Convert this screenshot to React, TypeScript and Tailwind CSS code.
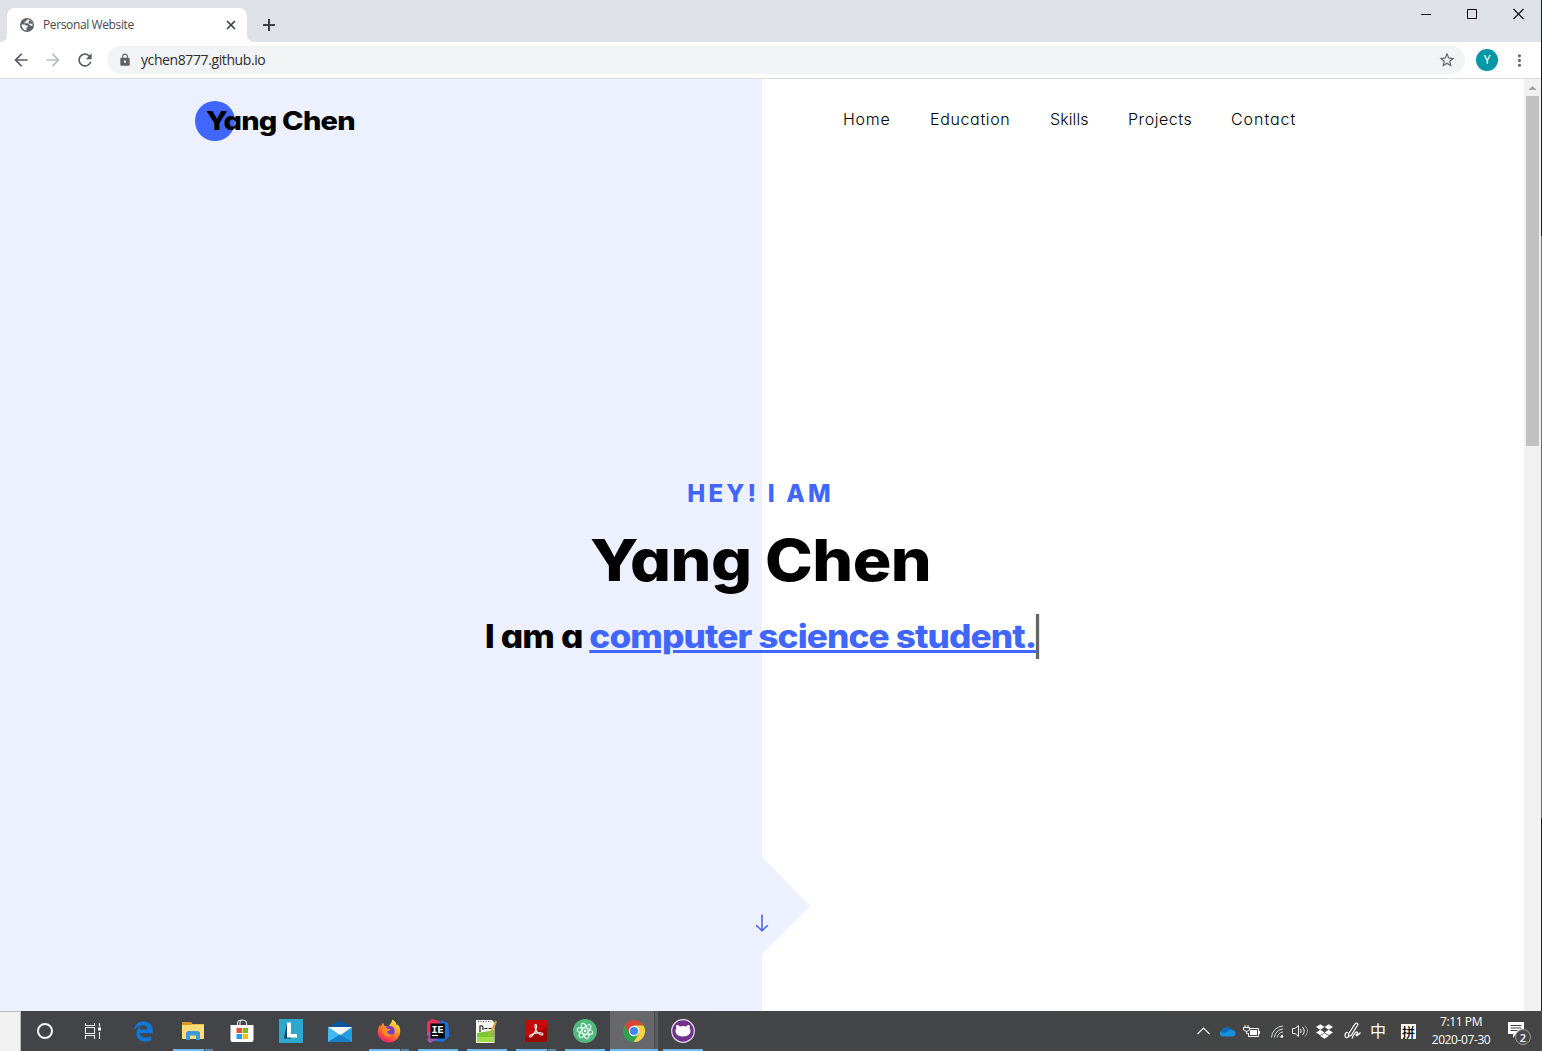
import type { ReactNode } from "react";
import {
  MdArrowBack,
  MdArrowForward,
  MdLock,
  MdMoreVert,
  MdRefresh,
  MdStarBorder,
} from "react-icons/md";
import { FaDropbox, FaEdgeLegacy } from "react-icons/fa";

const UI_FONT = "font-['Open_Sans','Noto_Sans',sans-serif]";

function GlobeIcon() {
  return (
    <svg className="ml-px shrink-0" width="14" height="14" viewBox="0 0 14 14">
      <circle cx="7" cy="7" r="7" fill="#5f6368" />
      <path d="M1.500 6.500h3.200l1.600 1.300h1.500v1.500H6.500v3.200Q2 12 1.500 6.500Z" fill="#fff" />
      <path d="M7.500 1.500l-1.300 1v1.300H4.500v1.500h3.700l1 1.400h1.300v1h2Q12.800 3 9.500 1.800Z" fill="#fff" />
      <path d="M9.300 1.700q3 1.300 3.200 4.500l-1.500-.7-1.800.3L8.300 4l1-.8Z" fill="#5f6368" />
    </svg>
  );
}

function TitleBar() {
  return (
    <div className="flex h-[42px] shrink-0 items-start bg-[#dee1e6]">
      <svg className="mt-[34px] h-2 w-[7px] shrink-0" viewBox="0 0 7 8">
        <path d="M7 0v8H0Q7 8 7 0Z" fill="#fff" />
      </svg>
      <div className="mt-2 flex h-[34px] w-[240px] shrink-0 items-center rounded-t-lg bg-white pr-[11px] pl-3">
        <GlobeIcon />
        <span className="ml-[9px] grow text-[12px] leading-4 tracking-[-0.38px] text-[#45494d]">Personal Website</span>
        <svg width="10" height="10" viewBox="0 0 10 10" stroke="#3c4043" strokeWidth="1.7">
          <path d="M1 1l8 8M9 1L1 9" />
        </svg>
      </div>
      <svg className="mt-[34px] h-2 w-2 shrink-0" viewBox="0 0 8 8">
        <path d="M0 0v8h8Q0 8 0 0Z" fill="#fff" />
      </svg>
      <svg className="mt-[19px] ml-2 shrink-0" width="12" height="12" viewBox="0 0 12 12" stroke="#3c4043" strokeWidth="2">
        <path d="M6 0v12M0 6h12" />
      </svg>
      <div className="mt-2 mr-[17px] ml-auto flex gap-[35px]">
        <svg width="11" height="12" viewBox="0 0 11 12" stroke="#000">
          <path d="M0 6.5h10" />
        </svg>
        <svg width="11" height="12" viewBox="0 0 11 12" fill="none" stroke="#000">
          <path d="M.5 1.5h9v9H.5z" />
        </svg>
        <svg width="11" height="12" viewBox="0 0 11 12" stroke="#111" strokeWidth="1.1">
          <path d="M.5 1l10 10M10.5 1l-10 10" />
        </svg>
      </div>
    </div>
  );
}

function Toolbar() {
  return (
    <div className="flex h-[37px] shrink-0 items-center border-b border-[#d9dbde] bg-white pl-[11px]">
      <MdArrowBack size={20} className="text-[#5a5e63]" />
      <MdArrowForward size={20} className="ml-3 text-[#babcbe]" />
      <MdRefresh size={20} className="ml-3 text-[#5a5e63]" />
      <div className="ml-3 flex h-7 w-[1358px] items-center rounded-full bg-[#f1f3f4] pr-[9px] pl-[11px]">
        <MdLock size={14} className="text-[#5f6368]" />
        <span className="ml-[9px] grow text-[14px] leading-5 tracking-[-0.4px] text-[#2c2d30]">
          ychen8777.github.io
        </span>
        <MdStarBorder size={18} className="text-[#5f6368]" />
      </div>
      <div className="ml-[11px] flex h-[22px] w-[22px] items-center justify-center rounded-full bg-[#0097a7] font-['Roboto',sans-serif] text-[12px] text-white">
        Y
      </div>
      <MdMoreVert size={19} className="ml-3 text-[#5f6368]" />
    </div>
  );
}

function Header() {
  return (
    <header className="relative flex h-[84px] items-center">
      <div className="ml-[195px] flex h-10 w-10 items-center rounded-full bg-[#4066ff]">
        <span className="ml-[11px] origin-left scale-x-[1.115] text-[26px] leading-none font-extrabold tracking-[-0.7px] whitespace-nowrap">
          Yang Chen
        </span>
      </div>
      <nav className="mb-[5px] ml-[608px] flex gap-10 text-[16px] leading-6 font-light">
        <a className="w-[47px] tracking-[0.7px]">Home</a>
        <a className="w-[80px] tracking-[0.65px]">Education</a>
        <a className="w-[38px] tracking-[0.1px]">Skills</a>
        <a className="w-[63px] tracking-[0.55px]">Projects</a>
        <a className="w-[65px] tracking-[0.95px]">Contact</a>
      </nav>
    </header>
  );
}

function Page() {
  return (
    <main className="relative h-[932px] w-[1524px] shrink-0 bg-[linear-gradient(90deg,#ecf0ff_50%,#ffffff_50%)] font-['Inter',sans-serif] text-black [font-feature-settings:'cv11']">
      <svg className="absolute top-[778px] left-[762px]" width="48" height="98" viewBox="0 0 48 98">
        <path d="M0 0l48 49L0 97Z" fill="#ecf0ff" />
      </svg>
      <Header />
      <section className="relative mt-[313px] flex flex-col items-center">
        <p className="mr-[3px] h-9 text-[24px] leading-9 font-extrabold tracking-[3.2px] text-[#4066ff]">HEY! I AM</p>
        <h1 className="mt-[13px] mr-[3px] h-[70px] scale-x-[1.11] text-[58px] leading-[70px] font-extrabold tracking-[-0.5px]">
          Yang Chen
        </h1>
        <h2 className="mt-[19px] flex h-[45px] scale-x-[1.1] text-[32px] leading-[45px] font-extrabold whitespace-pre">
          <span className="tracking-[-0.8px]">I am a </span>
          <span className="border-r-[3px] border-[#666] tracking-[-0.8px] text-[#4066ff] underline decoration-[3px] underline-offset-[2px]">
            computer science student.
          </span>
        </h2>
        <svg className="mt-[255px] mr-px" width="14" height="18" viewBox="0 0 14 18" fill="none" stroke="#4362e8" strokeWidth="1.5">
          <path d="M7 .5v16M1.2 11.2L7 16.8l5.8-5.6" />
        </svg>
      </section>
    </main>
  );
}

function Scrollbar() {
  return (
    <div className="flex w-[17px] shrink-0 flex-col items-center bg-[#f1f1f1]">
      <svg width="17" height="17" viewBox="0 0 17 17">
        <path d="M4.5 11L8.5 7l4 4Z" fill="#a3a3a3" />
      </svg>
      <div className="h-[350px] w-[13px] bg-[#c1c1c1]" />
    </div>
  );
}

type State = "idle" | "open" | "stacked" | "active";

function Task({ state = "idle", children }: { state?: State; children: ReactNode }) {
  return (
    <div className="relative flex h-full w-[49px] shrink-0 items-center justify-center">
      {state === "active" && (
        <div className="absolute inset-y-0 left-px flex w-[48px]">
          <div className="h-full w-[44px] bg-[#66676b]" />
          <div className="ml-px h-full w-[3px] bg-[#5b5c60]" />
        </div>
      )}
      <div className="relative">{children}</div>
      {state === "open" && <div className="absolute bottom-0 left-[5px] h-[2px] w-10 bg-[#76b9ed]" />}
      {state === "active" && <div className="absolute bottom-0 left-px h-[2px] w-12 bg-[#76b9ed]" />}
      {state === "stacked" && (
        <div className="absolute bottom-0 left-[5px] flex h-[2px] w-10">
          <div className="w-[31px] bg-[#76b9ed]" />
          <div className="ml-px w-2 bg-[#5787ab]" />
        </div>
      )}
    </div>
  );
}

const TaskViewIcon = () => (
  <svg width="18" height="18" viewBox="0 0 18 18" fill="none" stroke="#eee" strokeWidth="1.1">
    <path d="M1.5 5.5h9v6h-9zM1.5 1v2.5h9V1M1.5 17v-3.500h9V17M15.500 1v3.500M15.500 10v7" />
    <path d="M14 5.500h3v3h-3z" fill="#fff" stroke="none" />
  </svg>
);

const FolderIcon = () => (
  <svg width="22" height="20" viewBox="0 0 22 20">
    <path d="M0 1h9l1.500 2H22v15H0Z" fill="#f3bd3f" />
    <path d="M0 1h9l1 1.500L9 4H0Z" fill="#df9520" />
    <path d="M0 4h22v14H0Z" fill="#fbdc76" />
    <path d="M4 19v-7.500L6 10h10l2 1.500V19h-4v-4.500H8V19Z" fill="#3f9ad9" />
  </svg>
);

const StoreIcon = () => (
  <svg width="24" height="24" viewBox="0 0 24 24">
    <path d="M7.500 7V4.500Q7.500 1 12 1t4.500 3.500V7M10 6V4q0-3 3-3" fill="none" stroke="#ddd" strokeWidth="1.200" />
    <path d="M.5 6h23v15q0 2-2 2h-19q-2 0-2-2Z" fill="#fff" />
    <path d="M6.500 9H12v5H6.500Z" fill="#e8502b" />
    <path d="M12.700 9H18v5h-5.300Z" fill="#7fba00" />
    <path d="M6.500 15H12v5H6.500Z" fill="#209fe8" />
    <path d="M12.700 15H18v5h-5.300Z" fill="#fcb813" />
  </svg>
);

const LIcon = () => (
  <svg width="24" height="24" viewBox="0 0 24 24">
    <path d="M0 0h24v24H0Z" fill="#2da9cf" />
    <path d="M8 4L5 19.500h7l-2-4Z" fill="#15436b" />
    <path d="M8 3.500h4V15h6v3.500H8Z" fill="#fff" />
  </svg>
);

const MailIcon = () => (
  <svg width="24" height="22" viewBox="0 0 24 22">
    <path d="M0 7L12 0l12 7v4H0Z" fill="#0b559f" />
    <path d="M0 7h24v15H0Z" fill="#259fe4" />
    <path d="M0 7h24L12 15.500Z" fill="#f3f7fa" />
    <path d="M0 7l12 8L0 22Z" fill="#42b9ef" />
    <path d="M0 22l12-7.500L24 22Z" fill="#177fca" />
  </svg>
);

const FirefoxIcon = () => (
  <svg width="24" height="24" viewBox="0 0 24 24">
    <defs>
      <linearGradient id="ff" x1=".8" y1="0" x2=".25" y2="1">
        <stop offset="0" stopColor="#fff44f" />
        <stop offset=".4" stopColor="#ff9a20" />
        <stop offset=".75" stopColor="#ff4a3c" />
        <stop offset="1" stopColor="#e31587" />
      </linearGradient>
    </defs>
    <path
      d="M15.500.5c3 2 4 4.200 4.300 6l1-1C23 8 23.500 10.500 23.200 13 22.600 19 18 23.500 12 23.500S.8 19 .8 13c0-3 1-5.600 2.600-7.500L3.600 8 6 3.500 7.400 7l4 .3C13 5 14.800 3.500 15.500.5Z"
      fill="url(#ff)"
    />
    <circle cx="12.500" cy="12" r="5.200" fill="#7540d0" />
    <path d="M5 9.500c2-1.500 4-1.300 5.500.2l3 .3c-.5 1.600-2 2-3.500 2.500.7 2.500 3 3.500 6 2.500-2 3.500-7 3.500-9.500.5C5 13.500 4.500 11.500 5 9.500Z" fill="#ff8a22" />
  </svg>
);

const IntelliJIcon = () => (
  <svg width="24" height="24" viewBox="0 0 24 24">
    <path d="M1 3l5-3 8 2 3 8L5 20 1 16Z" fill="#e8305c" />
    <path d="M15 1l7 3 1.500 13L17 23l-8-1Z" fill="#1c6ee0" />
    <path d="M1 14l6-2 5 8-8 4-3-3 2-3Z" fill="#a154b5" />
    <path d="M4.500 4.500h14.300v15H4.500Z" fill="#08080a" />
    <text x="5.500" y="13.500" fill="#fff" fontFamily="Liberation Mono, monospace" fontSize="10" fontWeight="700">
      IE
    </text>
    <path d="M6.200 16.500h6" stroke="#fff" strokeWidth="1.200" />
  </svg>
);

const NotepadIcon = () => (
  <svg width="24" height="24" viewBox="0 0 24 24">
    <path d="M1 1h16l2.500 2.500V24H1Z" fill="#f6f7ef" />
    <path d="M2 14q7-1 17-3v12H2Z" fill="#79c832" />
    <path d="M2 18h17v5H2Z" fill="#a1dc49" />
    <path d="M3 2.500h13" stroke="#555" strokeDasharray="1 1.500" />
    <path d="M5 13V7q3-1 3 2v2m1.500-1.500h3m1 0h3" fill="none" stroke="#222" strokeWidth="1.200" />
    <path d="M20.500 4L15 15l-1.500 2" fill="none" stroke="#e2a137" strokeWidth="2" />
    <path d="M20 4.500l1.200-2.500" stroke="#d5934d" strokeWidth="2" />
  </svg>
);

const AcrobatIcon = () => (
  <svg width="22" height="22" viewBox="0 0 22 22">
    <path d="M0 0h22v22H0Z" fill="#c30b0a" />
    <path d="M0 17l22-10v15H0Z" fill="#9f0606" />
    <path
      d="M10.300 4.500c2.300-.6 1 4.500-.3 7.200-1.300 2.800-4 6-5.300 5.200-1.600-1.400 4-3.700 8-4 3.500-.3 5.500.2 5.200 1.500-.5 1.500-3.300 0-5.300-2-1.900-2-3.600-6.800-2.300-7.900Z"
      fill="none"
      stroke="#fff"
      strokeWidth="1.100"
    />
  </svg>
);

const AtomIcon = () => (
  <svg width="24" height="24" viewBox="0 0 24 24">
    <circle cx="12" cy="12" r="12" fill="#51b87e" />
    <g fill="none" stroke="#e5fff0" strokeWidth="1.100">
      <ellipse cx="12" cy="12" rx="3" ry="8" transform="rotate(-18 12 12)" />
      <ellipse cx="12" cy="12" rx="3" ry="8" transform="rotate(42 12 12)" />
      <ellipse cx="12" cy="12" rx="3" ry="8" transform="rotate(102 12 12)" />
    </g>
    <circle cx="12" cy="12" r="1.300" fill="#fff" />
  </svg>
);

const ChromeIcon = () => (
  <svg width="22" height="22" viewBox="0 0 22 22">
    <circle cx="11" cy="11" r="11" fill="#2da14d" />
    <path d="M1.500 5.500A11 11 0 0 1 20.500 5.500H11L6.200 13.700Z" fill="#db4437" />
    <path d="M20.500 5.500A11 11 0 0 1 10.600 22L15.800 13.700 11 5.500Z" fill="#fdcf42" />
    <circle cx="11" cy="11" r="5.200" fill="#fff" />
    <circle cx="11" cy="11" r="4.100" fill="#4384f3" />
  </svg>
);

const GitHubIcon = () => (
  <svg width="24" height="24" viewBox="0 0 24 24">
    <circle cx="12" cy="12" r="11.300" fill="#70328c" stroke="#e4d8ea" strokeWidth="1.200" />
    <path
      d="M5.500 6q1.500-.3 3.500 1.400 3-.6 6 0Q17 5.700 18.500 6q.6 1.500.2 3.200Q20 11 19.300 13.500 18 17.500 12 17.500t-7.300-4Q4 11 5.300 9.200 4.900 7.500 5.500 6Z"
      fill="#fff"
    />
  </svg>
);

function Tray() {
  return (
    <div className="ml-auto flex h-full items-center pr-[10px] text-white">
      <svg width="13" height="8" viewBox="0 0 13 8" fill="none" stroke="#eee" strokeWidth="1.200">
        <path d="M.5 7l6-6 6 6" />
      </svg>
      <svg className="ml-[9px]" width="17" height="11" viewBox="0 0 17 11">
        <path d="M3 10.500a3.200 3.200 0 0 1 .2-6.200A5 5 0 0 1 12 3.500q4.500.5 4.700 4Q16.500 10.500 13 10.500Z" fill="#1490df" />
        <path d="M1 6q1-2 3-2Q7-.8 11.500 3.200L6 7Z" fill="#0868b8" />
      </svg>
      <svg className="ml-[7px]" width="17" height="13" viewBox="0 0 17 13" fill="none" stroke="#fff">
        <path d="M7 3.500h8.500v8h-10V8M2 0v2.500M5 0v2.500M.5 2.500h6V5q-3 3-6 0ZM3.500 6v2.500h2M16.500 6v3" />
        <path d="M7 5h7v5H7Z" fill="#fff" stroke="none" />
      </svg>
      <svg className="ml-[10px]" width="14" height="14" viewBox="0 0 14 14" fill="none" stroke="#ddd">
        <path d="M1.500 13.500A12 12 0 0 1 13 2M4.500 13.500A9 9 0 0 1 13 5M7.500 13.500A6 6 0 0 1 13 8M10.500 13.500A3 3 0 0 1 13 11" />
        <circle cx="12" cy="12.500" r="1.200" fill="#fff" stroke="none" />
      </svg>
      <svg className="ml-[8px]" width="16" height="14" viewBox="0 0 16 14" fill="none" stroke="#eee">
        <path d="M.5 4.500h2.500l3.500-3v11l-3.500-3H.5ZM8.500 5q1.500 2 0 4M10.500 3q3.500 4 0 8" />
        <path d="M13 1.500q5 5.500 0 11" stroke="#999" />
      </svg>
      <FaDropbox size={17} className="ml-[8px]" />
      <svg className="ml-[11px]" width="17" height="18" viewBox="0 0 17 18" fill="none" stroke="#fff" strokeWidth="1.200">
        <path d="M4.500 12L11 2q2-2 3 .5L7.500 13l-3 1.500ZM4 10.500Q1 10 1 13.500 1.500 17 4.500 15M8 16.500q3-7 5-6.500 1.500 1-1 3 0 2 4.500-2.500" />
      </svg>
      <span className="ml-[9px] w-4 -translate-y-px font-['Noto_Sans_CJK_SC',sans-serif] text-[16px] leading-4">中</span>
      <span className="ml-[15px] flex h-[15px] w-[15px] items-center justify-center bg-white font-['Noto_Sans_CJK_SC',sans-serif] text-[13px] leading-none font-medium text-black">
        拼
      </span>
      <div className="ml-[12px] flex w-[66px] flex-col items-center text-[12px] leading-[18px] tracking-[-0.4px] whitespace-nowrap">
        <span>7:11 PM</span>
        <span>2020-07-30</span>
      </div>
      <div className="relative ml-[14px] h-[22px] w-[24px]">
        <svg width="17" height="17" viewBox="0 0 17 17" className="mt-[2px]">
          <path d="M0 0h16v12H8l-3 4v-4H0Z" fill="#fff" />
          <path d="M2.500 3.500h11M2.500 6h11M2.500 8.500h7" stroke="#444" />
        </svg>
        <span className="absolute top-[9px] left-[7px] flex h-4 w-4 items-center justify-center rounded-full border border-[#999] bg-[#4a4a4a] text-[11px] leading-none font-semibold">
          2
        </span>
      </div>
    </div>
  );
}

function Taskbar() {
  return (
    <div className={`flex h-10 shrink-0 items-center bg-[linear-gradient(90deg,#424448,#454545)] ${UI_FONT}`}>
      <div className="h-full w-[21px] shrink-0 border-t border-r border-[#bbb] bg-[#f1f1f1]" />
      <div className="flex w-12 shrink-0 items-center justify-center">
        <div className="h-4 w-4 rounded-full border-2 border-[#f5f5f5]" />
      </div>
      <div className="mr-[2px] flex w-12 shrink-0 items-center justify-center">
        <TaskViewIcon />
      </div>
      <Task><FaEdgeLegacy size={21} className="text-[#0f78d7]" /></Task>
      <Task state="stacked"><FolderIcon /></Task>
      <Task><StoreIcon /></Task>
      <Task><LIcon /></Task>
      <Task><MailIcon /></Task>
      <Task state="stacked"><FirefoxIcon /></Task>
      <Task state="open"><IntelliJIcon /></Task>
      <Task state="open"><NotepadIcon /></Task>
      <Task state="stacked"><AcrobatIcon /></Task>
      <Task state="open"><AtomIcon /></Task>
      <Task state="active"><ChromeIcon /></Task>
      <Task state="open"><GitHubIcon /></Task>
      <Tray />
    </div>
  );
}

export default function App() {
  return (
    <div className={`flex h-[1051px] w-[1542px] flex-col overflow-hidden bg-white ${UI_FONT}`}>
      <div className="flex h-[1011px] shrink-0">
        <div className="flex w-[1541px] shrink-0 flex-col">
          <TitleBar />
          <Toolbar />
          <div className="flex">
            <Page />
            <Scrollbar />
          </div>
        </div>
        <div className="flex w-px flex-col bg-[#1c1c1c]">
          <div className="mt-[236px] h-[582px] bg-[#707070]" />
        </div>
      </div>
      <Taskbar />
    </div>
  );
}
